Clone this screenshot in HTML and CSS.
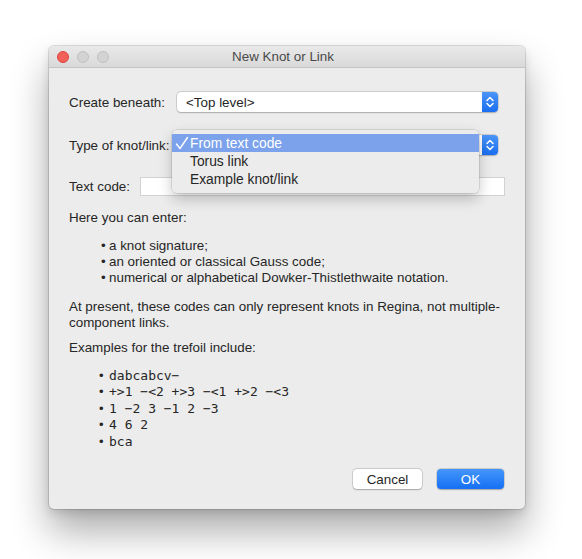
FILE: index.html
```html
<!DOCTYPE html>
<html>
<head>
<meta charset="utf-8">
<link rel="stylesheet" href="styles.css">
</head>
<body>
<div class="window">
  <div class="titlebar">
    <div class="lights">
      <span class="light red"></span>
      <span class="light"></span>
      <span class="light"></span>
    </div>
    <div class="title">New Knot or Link</div>
  </div>
  <div class="content">
    <div class="row">
      <span class="label">Create beneath:</span>
      <div class="select">
        <span class="val">&lt;Top level&gt;</span>
        <span class="stepper"><svg width="16" height="20" viewBox="0 0 16 20"><path d="M5 8.5 L8 5.5 L11 8.5 M5 11.5 L8 14.5 L11 11.5" fill="none" stroke="#fff" stroke-width="1.5" stroke-linecap="round" stroke-linejoin="round"/></svg></span>
      </div>
    </div>
    <div class="row row-type">
      <span class="label">Type of knot/link:</span>
      <div class="select">
        <span class="val">From text code</span>
        <span class="stepper"><svg width="16" height="20" viewBox="0 0 16 20"><path d="M5 8.5 L8 5.5 L11 8.5 M5 11.5 L8 14.5 L11 11.5" fill="none" stroke="#fff" stroke-width="1.5" stroke-linecap="round" stroke-linejoin="round"/></svg></span>
      </div>
      <div class="menu">
        <div class="item selected"><span class="check"><svg width="14" height="14" viewBox="0 0 14 14"><path d="M1.5 8 L5 12.5 L12.5 1.5" fill="none" stroke="#fff" stroke-width="1.4" stroke-linecap="round" stroke-linejoin="round"/></svg></span>From text code</div>
        <div class="item"><span class="check"></span>Torus link</div>
        <div class="item"><span class="check"></span>Example knot/link</div>
      </div>
    </div>
    <div class="row row-code">
      <span class="label">Text code:</span>
      <div class="input"></div>
    </div>
    <p class="para p1">Here you can enter:</p>
    <ul class="list">
      <li>a knot signature;</li>
      <li>an oriented or classical Gauss code;</li>
      <li>numerical or alphabetical Dowker-Thistlethwaite notation.</li>
    </ul>
    <p class="para p2">At present, these codes can only represent knots in Regina, not multiple-component links.</p>
    <p class="para p3">Examples for the trefoil include:</p>
    <ul class="list mono">
      <li>dabcabcv−</li>
      <li>+&gt;1 −&lt;2 +&gt;3 −&lt;1 +&gt;2 −&lt;3</li>
      <li>1 −2 3 −1 2 −3</li>
      <li>4 6 2</li>
      <li>bca</li>
    </ul>
    <div class="buttons">
      <button class="btn">Cancel</button>
      <button class="btn primary">OK</button>
    </div>
  </div>
</div>
</body>
</html>
```

FILE: styles.css
```css
html {
  margin: 0;
  padding: 0;
  background: #ffffff;
  height: 100%;
}
body {
  margin: 0;
  min-height: 100%;
  box-sizing: border-box;
  padding: 46px 0 0 49px;
  font-family: "Liberation Sans", Arial, sans-serif;
  font-size: 13.4px;
  color: #262626;
}
.window {
  width: 476px;
  height: 463px;
  box-sizing: border-box;
  background: #ececec;
  border-radius: 5px;
  box-shadow: 0 0 0 1px rgba(0,0,0,0.12), 0 22px 38px rgba(0,0,0,0.33), 0 4px 10px rgba(0,0,0,0.12);
  display: flex;
  flex-direction: column;
}
.titlebar {
  height: 22px;
  box-sizing: border-box;
  background: linear-gradient(#e9e9e9, #d9d9d9);
  border-bottom: 1px solid #c4c4c4;
  border-radius: 5px 5px 0 0;
  display: flex;
  align-items: center;
}
.lights {
  display: flex;
  gap: 8px;
  padding-left: 8px;
}
.light {
  width: 12px;
  height: 12px;
  border-radius: 50%;
  box-sizing: border-box;
  background: #d3d3d3;
  border: 0.5px solid #c0c0c0;
}
.light.red {
  background: #f2605a;
  border-color: #e0443e;
}
.title {
  flex: 1;
  text-align: center;
  margin-left: -68px;
  color: #4a4a4a;
  font-size: 13.4px;
}
.content {
  flex: 1;
  padding: 24px 20px 20px 20px;
  display: flex;
  flex-direction: column;
}
.row {
  display: flex;
  align-items: center;
  height: 20px;
  position: relative;
}
.label {
  width: 108px;
  flex: none;
}
.row-code .label {
  width: 71px;
}
.row-type {
  margin-top: 23px;
}
.row-code {
  margin-top: 22px;
  height: 19px;
}
.select {
  flex: 1;
  margin-right: 7px;
  height: 20px;
  background: #fff;
  border-radius: 4px;
  box-shadow: 0 0 0 0.5px rgba(0,0,0,0.2), 0 0.5px 1.5px rgba(0,0,0,0.2);
  display: flex;
  align-items: center;
}
.select .val {
  flex: 1;
  padding-left: 9px;
}
.stepper {
  width: 16px;
  height: 20px;
  display: block;
  background: linear-gradient(#4b95f8, #1b6ff1);
  border-radius: 0 4px 4px 0;
}
.stepper svg {
  display: block;
}
.input {
  flex: 1;
  height: 19px;
  box-sizing: border-box;
  background: #fff;
  border: 1px solid #d2d2d2;
}
.menu {
  position: absolute;
  left: 103px;
  top: -5px;
  width: 307px;
  box-sizing: border-box;
  padding: 4px 0 5px;
  background: rgba(236,236,236,0.98);
  border-radius: 5px;
  box-shadow: 0 0 0 0.5px rgba(0,0,0,0.18), 0 6px 14px rgba(0,0,0,0.22);
  z-index: 2;
}
.item {
  height: 18px;
  display: flex;
  align-items: center;
  color: #262626;
  font-size: 13.8px;
}
.item .check {
  width: 18px;
  height: 18px;
  padding-left: 3px;
  box-sizing: border-box;
  display: flex;
  align-items: center;
}
.item .check svg {
  display: block;
}
.item.selected {
  background: #7ba2ea;
  color: #fff;
}
.para {
  margin: 12px 0 0;
  line-height: 16px;
}
.p1 {
  margin-top: 14px;
}
.p2 {
  margin-top: 13px;
}
.p3 {
  margin-top: 9px;
}
.list {
  margin: 12px 0 0;
  padding: 0 0 0 40px;
  list-style: none;
  line-height: 16px;
}
.list li {
  position: relative;
}
.list li::before {
  content: "•";
  position: absolute;
  left: -8px;
}
.mono {
  margin-top: 12px;
  font-family: "DejaVu Sans Mono", monospace;
  font-size: 13px;
  line-height: 16.4px;
}
.mono li::before {
  font-family: "Liberation Sans", sans-serif;
  left: -10px;
}
.buttons {
  margin-top: auto;
  display: flex;
  justify-content: flex-end;
  gap: 15px;
  padding-right: 1px;
}
.btn {
  height: 20px;
  width: 69px;
  padding: 0;
  border: none;
  border-radius: 4px;
  background: #fff;
  box-shadow: 0 0 0 0.5px rgba(0,0,0,0.2), 0 0.5px 1.5px rgba(0,0,0,0.22);
  font-family: "Liberation Sans", Arial, sans-serif;
  font-size: 13.4px;
  color: #262626;
}
.btn.primary {
  width: 67px;
  background: linear-gradient(#4596fa, #1570f4);
  color: #fff;
}
```
